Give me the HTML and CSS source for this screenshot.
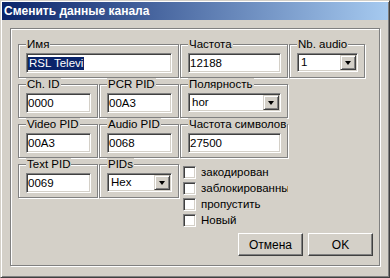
FILE: index.html
```html
<!DOCTYPE html>
<html>
<head>
  <meta charset="utf-8">
  <title>Сменить данные канала</title>
  <link rel="stylesheet" href="styles.css">
</head>
<body>
  <div class="window">
    <div class="titlebar">Сменить данные канала</div>

    <div class="panel">
      <div class="fields">
        <fieldset class="group wide">
          <legend>Имя</legend>
          <div class="edit"><span class="selected">RSL Televi</span></div>
        </fieldset>
        <fieldset class="group">
          <legend>Частота</legend>
          <div class="edit">12188</div>
        </fieldset>
        <fieldset class="group">
          <legend>Nb. audio</legend>
          <div class="combo"><span class="value">1</span><span class="drop"></span></div>
        </fieldset>

        <fieldset class="group rowStart">
          <legend>Ch. ID</legend>
          <div class="edit">0000</div>
        </fieldset>
        <fieldset class="group">
          <legend>PCR PID</legend>
          <div class="edit">00A3</div>
        </fieldset>
        <fieldset class="group">
          <legend>Полярность</legend>
          <div class="combo"><span class="value">hor</span><span class="drop"></span></div>
        </fieldset>

        <fieldset class="group rowStart">
          <legend>Video PID</legend>
          <div class="edit">00A3</div>
        </fieldset>
        <fieldset class="group">
          <legend>Audio PID</legend>
          <div class="edit">0068</div>
        </fieldset>
        <fieldset class="group">
          <legend>Частота символов</legend>
          <div class="edit">27500</div>
        </fieldset>

        <fieldset class="group rowStart">
          <legend>Text PID</legend>
          <div class="edit">0069</div>
        </fieldset>
        <fieldset class="group">
          <legend>PIDs</legend>
          <div class="combo"><span class="value">Hex</span><span class="drop"></span></div>
        </fieldset>

        <div class="checks">
          <label class="check"><span class="box"></span><span class="caption">закодирован</span></label>
          <label class="check"><span class="box"></span><span class="caption">заблокированный</span></label>
          <label class="check"><span class="box"></span><span class="caption">пропустить</span></label>
          <label class="check"><span class="box"></span><span class="caption">Новый</span></label>
        </div>
      </div>

      <div class="buttons">
        <button class="winButton">Отмена</button>
        <button class="winButton">OK</button>
      </div>
    </div>
  </div>
</body>
</html>
```

FILE: styles.css
```css
*{
  box-sizing: border-box;
}

body{
  margin: 0;
  background-color: #d4d0c8;
  font-family: "Liberation Sans", Arial, sans-serif;
  font-size: 11.5px;
  color: #000;
}

/* window frame, win2000 style */
.window{
  width: 390px;
  height: 278px;
  padding: 1px;
  background-color: #d4d0c8;
  border: 1px solid;
  border-color: #d4d0c8 #404040 #404040 #d4d0c8;
  box-shadow: inset 1px 1px #fff, inset -1px -1px #808080;
  display: flex;
  flex-direction: column;
}

.titlebar{
  height: 18px;
  padding-left: 2px;
  background: linear-gradient(to right, #0a246a, #a6caf0);
  color: #fff;
  font-weight: bold;
  font-size: 12px;
  line-height: 18px;
  white-space: nowrap;
}

/* etched panel round the fields */
.panel{
  margin: 8px 8px 8px 8px;
  height: 238px;
  padding: 9px 6px 0 7px;
  border: 1px solid #808080;
  box-shadow: inset 1px 1px #fff, 1px 1px #fff;
}

.fields{
  display: grid;
  grid-template-columns: 80px 80px 108px 76px;
  grid-template-rows: 40px 40px 40px auto;
  column-gap: 1px;
}

.group{
  margin: 0;
  min-width: 0;
  height: 40px;
  padding: 2px 6px 4px 7px;
  border: 1px solid #808080;
  box-shadow: inset 1px 1px #fff, 1px 1px #fff;
}
.group legend{
  padding: 0 1px;
  line-height: 13px;
  background-color: #d4d0c8;
  white-space: nowrap;
}
.wide{
  grid-column: span 2;
}
.rowStart{
  grid-column-start: 1;
}

/* sunken edit box */
.edit{
  height: 20px;
  padding: 0 1px;
  background-color: #fff;
  border: 1px solid;
  border-color: #808080 #fff #fff #808080;
  box-shadow: inset 1px 1px #404040, inset -1px -1px #d4d0c8;
  line-height: 18px;
  white-space: nowrap;
  overflow: hidden;
}
.selected{
  display: inline-block;
  padding: 0 1px;
  line-height: 13px;
  background-color: #0a246a;
  color: #fff;
}

.combo{
  height: 19px;
  padding: 1px;
  display: flex;
  background-color: #fff;
  border: 1px solid;
  border-color: #808080 #fff #fff #808080;
  box-shadow: inset 1px 1px #404040, inset -1px -1px #d4d0c8;
}
.combo .value{
  flex: 1;
  padding-left: 2px;
  line-height: 15px;
}
.drop{
  width: 16px;
  height: 15px;
  background-color: #d4d0c8;
  border: 1px solid;
  border-color: #d4d0c8 #404040 #404040 #d4d0c8;
  box-shadow: inset 1px 1px #fff, inset -1px -1px #808080;
  display: flex;
  align-items: center;
  justify-content: center;
}
.drop::after{
  content: "";
  border-left: 3.5px solid transparent;
  border-right: 3.5px solid transparent;
  border-top: 4px solid #000;
}

/* check boxes */
.checks{
  grid-column: 3 / span 2;
  padding: 6px 0 0 3px;
}
.check{
  display: flex;
  align-items: center;
  height: 16px;
}
.box{
  width: 13px;
  height: 13px;
  flex: none;
  background-color: #fff;
  border: 1px solid;
  border-color: #808080 #fff #fff #808080;
  box-shadow: inset 1px 1px #404040, inset -1px -1px #d4d0c8;
}
.caption{
  margin-left: 5px;
  max-width: 87px;
  overflow: hidden;
  white-space: nowrap;
  line-height: 14px;
}

.buttons{
  display: flex;
  justify-content: flex-end;
  gap: 5px;
  margin-top: 5px;
}
.winButton{
  width: 65px;
  height: 23px;
  padding: 0;
  font-family: "Liberation Sans", Arial, sans-serif;
  font-size: 12px;
  color: #000;
  background-color: #d4d0c8;
  border: 1px solid;
  border-color: #fff #404040 #404040 #fff;
  box-shadow: inset -1px -1px #808080;
}
```
